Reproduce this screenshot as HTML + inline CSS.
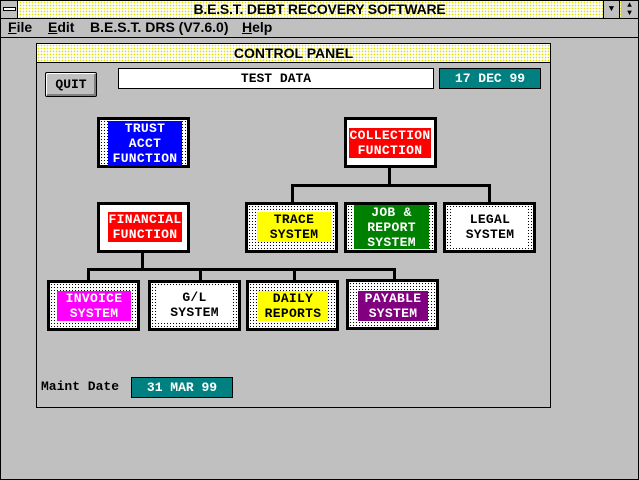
<!DOCTYPE html>
<html><head><style>
*{margin:0;padding:0;box-sizing:border-box}
body{width:639px;height:480px;background:#c0c0c0;position:relative;overflow:hidden;font-family:"Liberation Mono",monospace;font-weight:bold;font-size:13px}
.a{position:absolute}
.sans{font-family:"Liberation Sans",sans-serif;font-weight:bold}
.dotY{background-color:#fff;background-image:radial-gradient(#e0e000 0.7px,transparent 0.9px);background-size:3px 3px}
.dot{background-color:#fff;background-image:radial-gradient(#000 0.6px,transparent 0.8px);background-size:3px 3px}
.box{position:absolute;border:3px solid #000;width:93px;height:51px}
.in{position:absolute;display:flex;align-items:center;justify-content:center;text-align:center;line-height:15px;letter-spacing:0.3px}
.ln{position:absolute;background:#000}
</style></head><body>
<div class="a" style="left:0;top:0;width:639px;height:480px;border:1px solid #000;border-top:none"></div>
<div class="a dotY" style="left:0;top:0;width:639px;height:19px;border:1px solid #000"></div>
<div class="a" style="left:1px;top:1px;width:17px;height:17px;background:#c0c0c0;border-right:1px solid #000"></div>
<div class="a" style="left:3px;top:7px;width:13px;height:4px;border:1px solid #000;background:#fff"></div>
<div class="a sans" style="left:0;top:0;width:639px;text-align:center;font-size:14px;line-height:19px;color:#000;letter-spacing:-0.2px">B.E.S.T. DEBT RECOVERY SOFTWARE</div>
<div class="a" style="left:603px;top:1px;width:17px;height:17px;background:#c0c0c0;border-left:1px solid #000;border-right:1px solid #000;font-size:9px;text-align:center;line-height:17px">▼</div>
<div class="a" style="left:621px;top:1px;width:17px;height:17px;background:#c0c0c0;font-size:8px;text-align:center;line-height:8px;padding-top:1px">▲<br>▼</div>
<div class="a sans" style="left:0;top:18px;width:639px;height:20px;border-bottom:1px solid #000;font-size:14px;line-height:19px">
<span class="a" style="left:8px"><u>F</u>ile</span>
<span class="a" style="left:48px"><u>E</u>dit</span>
<span class="a" style="left:90px">B.E.S.T. DRS (V7.6.0)</span>
<span class="a" style="left:242px"><u>H</u>elp</span>
</div>
<div class="a" style="left:36px;top:43px;width:515px;height:365px;border:1px solid #000"></div>
<div class="a dotY" style="left:36px;top:43px;width:515px;height:20px;border:1px solid #000"></div>
<div class="a sans" style="left:36px;top:43px;width:515px;text-align:center;line-height:20px;font-size:14px">CONTROL PANEL</div>
<div class="a" style="left:45px;top:72px;width:52px;height:25px;border:1px solid #000;border-radius:2px;background:#c0c0c0;box-shadow:inset 1px 1px 0 #fff,inset -2px -2px 0 #808080;text-align:center;line-height:23px">QUIT</div>
<div class="a" style="left:118px;top:68px;width:316px;height:21px;border:1px solid #000;background:#fff;text-align:center;line-height:19px">TEST DATA</div>
<div class="a" style="left:439px;top:68px;width:102px;height:21px;border:1px solid #000;background:#008080;color:#fff;text-align:center;line-height:19px">17 DEC 99</div>
<div class="ln" style="left:388px;top:168px;width:3px;height:18px"></div>
<div class="ln" style="left:291px;top:184px;width:199px;height:3px"></div>
<div class="ln" style="left:291px;top:184px;width:3px;height:19px"></div>
<div class="ln" style="left:488px;top:184px;width:3px;height:19px"></div>
<div class="ln" style="left:141px;top:252px;width:3px;height:18px"></div>
<div class="ln" style="left:87px;top:268px;width:309px;height:3px"></div>
<div class="ln" style="left:87px;top:268px;width:3px;height:12px"></div>
<div class="ln" style="left:199px;top:268px;width:3px;height:12px"></div>
<div class="ln" style="left:293px;top:268px;width:3px;height:12px"></div>
<div class="ln" style="left:393px;top:268px;width:3px;height:12px"></div>
<div class="box dot" style="left:97px;top:117px"></div>
<div class="in" style="left:108px;top:121px;width:74px;height:45px;background:#0000ff;color:#fff">TRUST<br>ACCT<br>FUNCTION</div>
<div class="box" style="left:344px;top:117px;background:#fff"></div>
<div class="in" style="left:349px;top:128px;width:82px;height:30px;background:#ff0000;color:#fff">COLLECTION<br>FUNCTION</div>
<div class="box" style="left:97px;top:202px;background:#fff"></div>
<div class="in" style="left:108px;top:212px;width:74px;height:30px;background:#ff0000;color:#fff">FINANCIAL<br>FUNCTION</div>
<div class="box dot" style="left:245px;top:202px"></div>
<div class="in" style="left:257px;top:212px;width:74px;height:30px;background:#ffff00;color:#000">TRACE<br>SYSTEM</div>
<div class="box dot" style="left:344px;top:202px"></div>
<div class="in" style="left:354px;top:205px;width:75px;height:44px;background:#008000;color:#fff">JOB &amp;<br>REPORT<br>SYSTEM</div>
<div class="box dot" style="left:443px;top:202px"></div>
<div class="in" style="left:453px;top:207px;width:74px;height:40px;background:#fff;color:#000">LEGAL<br>SYSTEM</div>
<div class="box dot" style="left:47px;top:280px"></div>
<div class="in" style="left:57px;top:291px;width:74px;height:30px;background:#ff00ff;color:#fff">INVOICE<br>SYSTEM</div>
<div class="box dot" style="left:148px;top:280px"></div>
<div class="in" style="left:157px;top:287px;width:75px;height:36px;background:#fff;color:#000">G/L<br>SYSTEM</div>
<div class="box dot" style="left:246px;top:280px"></div>
<div class="in" style="left:258px;top:291px;width:70px;height:30px;background:#ffff00;color:#000">DAILY<br>REPORTS</div>
<div class="box dot" style="left:346px;top:279px"></div>
<div class="in" style="left:358px;top:291px;width:70px;height:30px;background:#800080;color:#fff">PAYABLE<br>SYSTEM</div>
<div class="a" style="left:41px;top:379px;line-height:16px">Maint Date</div>
<div class="a" style="left:131px;top:377px;width:102px;height:21px;border:1px solid #000;background:#008080;color:#fff;text-align:center;line-height:19px">31 MAR 99</div>
</body></html>
